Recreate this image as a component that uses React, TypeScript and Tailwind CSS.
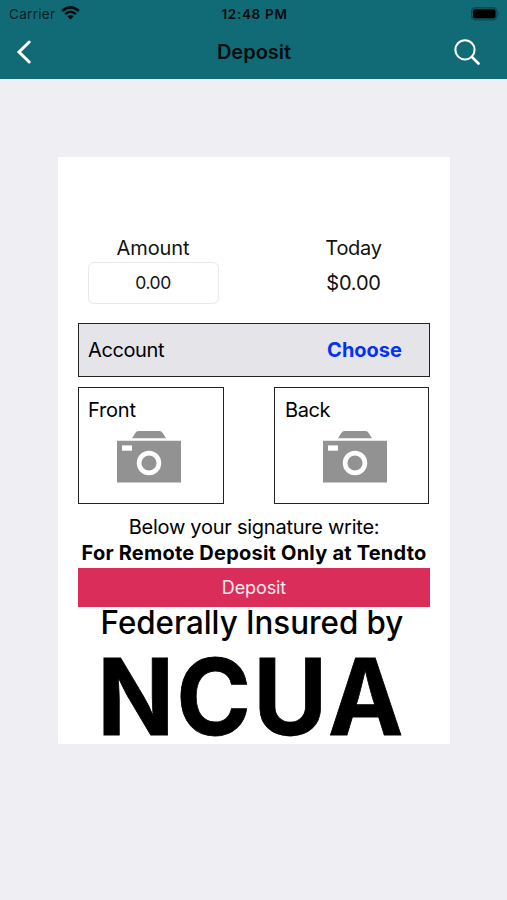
import React from "react";

function Camera() {
  return (
    <svg width="64" height="52" viewBox="0 0 64 52" className="block">
      <path d="M15 7.3 18.5 1.7Q19.5 0 21.5 0H42.5Q44.5 0 45.5 1.7L49 7.3Z" fill="#929292" />
      <path d="M0 9.7H64V51.5H0Z" fill="#929292" />
      <path d="M5 14.4H15V19.7H5Z" fill="#fff" />
      <circle cx="32" cy="32" r="9.9" fill="none" stroke="#fff" strokeWidth="4.7" />
    </svg>
  );
}

function StatusBar() {
  return (
    <div className="flex h-[27px] items-center pl-[9px] pr-[7px] text-[13px]">
      <div className="flex w-[200px] items-center gap-[6px]">
        <span className="pt-px text-[13.5px] tracking-[0.3px] text-black/75">Carrier</span>
        <svg width="19" height="14" viewBox="0 0 19 14" className="-mt-px">
          <path d="M1.2 5.1Q9.5-2.2 17.8 5.1" fill="none" stroke="#020c0e" strokeWidth="2.7" />
          <path d="M4.1 8.1Q9.5 3.4 14.9 8.1" fill="none" stroke="#020c0e" strokeWidth="2.5" />
          <path d="M6.4 10.3Q9.5 7.8 12.6 10.3L9.5 13.5Z" fill="#020c0e" />
        </svg>
      </div>
      <div className="flex-1 pt-px text-center text-[13.5px] font-semibold tracking-[0.7px] whitespace-nowrap text-[#020c0e]">12:48 PM</div>
      <div className="flex w-[200px] justify-end">
        <svg width="29" height="14" viewBox="0 0 29 14">
          <rect x="0.5" y="0.5" width="25.5" height="12.5" rx="3.5" fill="#0d545f" stroke="#0b4a54" />
          <rect x="2" y="2.2" width="22.5" height="9" rx="2" fill="#000" />
          <path d="M27.2 4.5Q29 6.7 27.2 9Z" fill="#0b4a54" />
        </svg>
      </div>
    </div>
  );
}

function Header() {
  return (
    <header className="h-[79px] bg-[#106b77]">
      <StatusBar />
      <div className="flex h-[50px] items-center justify-between pl-4 pr-[26px]">
        <div className="w-[40px]">
          <svg width="16" height="24" viewBox="0 0 16 24" className="block">
            <path d="M13.2 2 3 12 13.2 22" fill="none" stroke="#fff" strokeWidth="3" strokeLinecap="round" />
          </svg>
        </div>
        <h1 className="ml-[11px] text-[20px] leading-[50px] font-semibold text-[#020c0e]">Deposit</h1>
        <div className="flex w-[40px] justify-end">
          <svg width="28" height="28" viewBox="0 0 28 28" className="block">
            <circle cx="12" cy="11.8" r="9.6" fill="none" stroke="#fff" strokeWidth="2" />
            <path d="m19 19 6.5 6.5" stroke="#fff" strokeWidth="2.7" strokeLinecap="round" />
          </svg>
        </div>
      </div>
    </header>
  );
}

export default function App() {
  return (
    <div className="h-[900px] w-[507px] bg-[#efeef3] font-['Inter',sans-serif] text-black">
      <Header />
      <main className="pt-[78px] pl-[58px]">
        <section className="h-[587px] w-[391.5px] bg-white px-5 pt-[78px]">
          <div className="flex h-[88px] justify-between">
            <div className="flex w-[150px] flex-col items-center text-[#111]">
              <div className="h-[27px] pt-px text-[20px] leading-[25px] tracking-[-0.1px]">Amount</div>
              <div className="flex h-[42px] w-[131px] items-center justify-center rounded-md border border-[#e9e9ec] text-[17.5px] tracking-[-0.45px]">0.00</div>
            </div>
            <div className="flex w-[152px] flex-col items-center text-[#111]">
              <div className="h-[35px] pt-px text-[20px] leading-[25px] tracking-[-0.3px]">Today</div>
              <div className="text-[20px] leading-[26px] tracking-[-0.2px]">$0.00</div>
            </div>
          </div>
          <div className="flex h-[54px] w-[352px] items-center justify-between border border-[#222] bg-[#e5e4e9] pl-[9px] pr-[27px] text-[20px]">
            <span className="tracking-[-0.4px]">Account</span>
            <button className="font-bold text-[#0433ef]">Choose</button>
          </div>
          <div className="mt-[10px] flex h-[117px] w-[351px] justify-between">
            <div className="w-[146px] border border-[#222] pt-[9px]">
              <div className="pl-[9px] text-[20px] leading-[26px] tracking-[-0.2px]">Front</div>
              <div className="mt-[8px] pl-[38px]"><Camera /></div>
            </div>
            <div className="w-[155px] border border-[#222] pt-[9px]">
              <div className="pl-[10px] text-[20px] leading-[26px] tracking-[-0.4px]">Back</div>
              <div className="mt-[8px] pl-[48px]"><Camera /></div>
            </div>
          </div>
          <div className="h-[64px] w-[352px] pt-[10px] text-center whitespace-nowrap">
            <div className="text-[20px] leading-[26px] tracking-[-0.25px]">Below your signature write:</div>
            <div className="text-[20px] leading-[27px] font-bold tracking-[0.22px]">For Remote Deposit Only at Tendto</div>
          </div>
          <button className="block h-[39px] w-[352px] bg-[#db2d5a] text-[18px] tracking-[-0.1px] text-white/90">Deposit</button>
          <svg width="352" height="136" viewBox="0 0 352 136" className="block overflow-visible">
            <text x="22.6" y="27" fontSize="32" fontWeight="500" textLength="302.7" lengthAdjust="spacingAndGlyphs">Federally Insured by</text>
            <text transform="scale(0.955 1)" x="20.2 103 183.4 261.7" y="128" fontSize="105.8" fontWeight="700" stroke="#000" strokeWidth="0.8">NCUA</text>
          </svg>
        </section>
      </main>
    </div>
  );
}
